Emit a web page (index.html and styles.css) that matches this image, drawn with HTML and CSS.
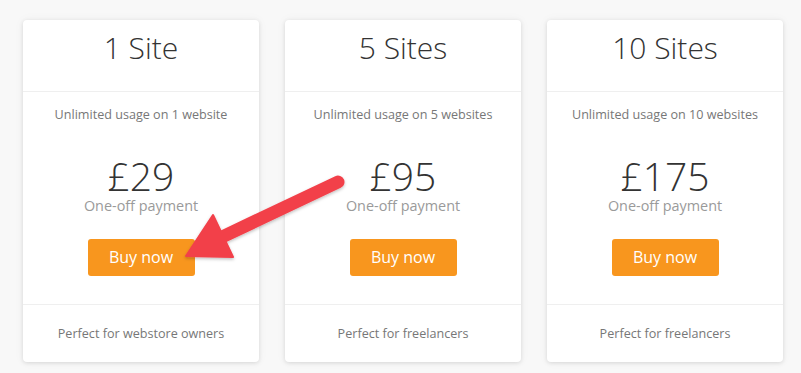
FILE: index.html
```html
<!DOCTYPE html>
<html>
<head>
<meta charset="utf-8">
<link rel="stylesheet" href="styles.css">
</head>
<body>
<div class="plans">
  <div class="card">
    <div class="head"><h2>1 Site</h2></div>
    <div class="body">
      <p class="usage">Unlimited usage on 1 website</p>
      <div class="price">£29</div>
      <div class="note">One-off payment</div>
      <a class="buy">Buy now</a>
    </div>
    <div class="foot">Perfect for webstore owners</div>
  </div>
  <div class="card">
    <div class="head"><h2>5 Sites</h2></div>
    <div class="body">
      <p class="usage">Unlimited usage on 5 websites</p>
      <div class="price">£95</div>
      <div class="note">One-off payment</div>
      <a class="buy">Buy now</a>
    </div>
    <div class="foot">Perfect for freelancers</div>
  </div>
  <div class="card">
    <div class="head"><h2>10 Sites</h2></div>
    <div class="body">
      <p class="usage">Unlimited usage on 10 websites</p>
      <div class="price">£175</div>
      <div class="note">One-off payment</div>
      <a class="buy">Buy now</a>
    </div>
    <div class="foot">Perfect for freelancers</div>
  </div>
</div>
<svg class="arrow" width="801" height="373" viewBox="0 0 801 373">
  <defs>
    <filter id="sh" x="-20%" y="-20%" width="140%" height="140%">
      <feDropShadow dx="0" dy="1.5" stdDeviation="1.5" flood-color="#000" flood-opacity="0.25"/>
    </filter>
  </defs>
  <g filter="url(#sh)" fill="#f2404a" stroke="#f2404a">
    <line x1="338" y1="182" x2="222" y2="237" stroke-width="13" stroke-linecap="round"/>
    <polygon points="186,256 213,215 233,257" stroke-width="2" stroke-linejoin="round"/>
  </g>
</svg>
</body>
</html>
```
FILE: styles.css
```css
html, body { margin: 0; padding: 0; }
body {
  background: #f8f8f8;
  font-family: "Open Sans", "Liberation Sans", sans-serif;
  width: 801px;
  height: 373px;
  overflow: hidden;
  position: relative;
}
.plans {
  display: flex;
  gap: 26px;
  padding: 20px 0 0 23px;
}
.card {
  width: 236px;
  height: 342px;
  background: #fff;
  border-radius: 4px;
  box-shadow: 0 1px 4px rgba(0,0,0,0.12), 0 0 12px rgba(0,0,0,0.04);
  display: flex;
  flex-direction: column;
  text-align: center;
}
.head {
  height: 72px;
  box-sizing: border-box;
  padding-top: 10px;
  border-bottom: 1px solid #efefef;
}
.head h2 {
  margin: 0;
  font-size: 30px;
  line-height: 36px;
  font-weight: 300;
  color: #333;
}
.body {
  height: 213px;
  box-sizing: border-box;
  padding-top: 13px;
  border-bottom: 1px solid #efefef;
  display: flex;
  flex-direction: column;
  align-items: center;
}
.usage {
  margin: 0;
  font-size: 12.6px;
  line-height: 20px;
  color: #777;
}
.price {
  margin-top: 30px;
  font-size: 39px;
  line-height: 42px;
  font-weight: 300;
  color: #333;
}
.note {
  font-size: 14.4px;
  line-height: 18px;
  color: #9a9a9a;
  font-weight: 400;
}
.buy {
  margin-top: 24px;
  width: 107px;
  height: 37px;
  line-height: 37px;
  background: #f8961e;
  color: #fff;
  border-radius: 3px;
  font-size: 16px;
}
.foot {
  padding-top: 19px;
  font-size: 12.6px;
  line-height: 20px;
  color: #777;
}
.arrow {
  position: absolute;
  left: 0;
  top: 0;
  pointer-events: none;
}
```
